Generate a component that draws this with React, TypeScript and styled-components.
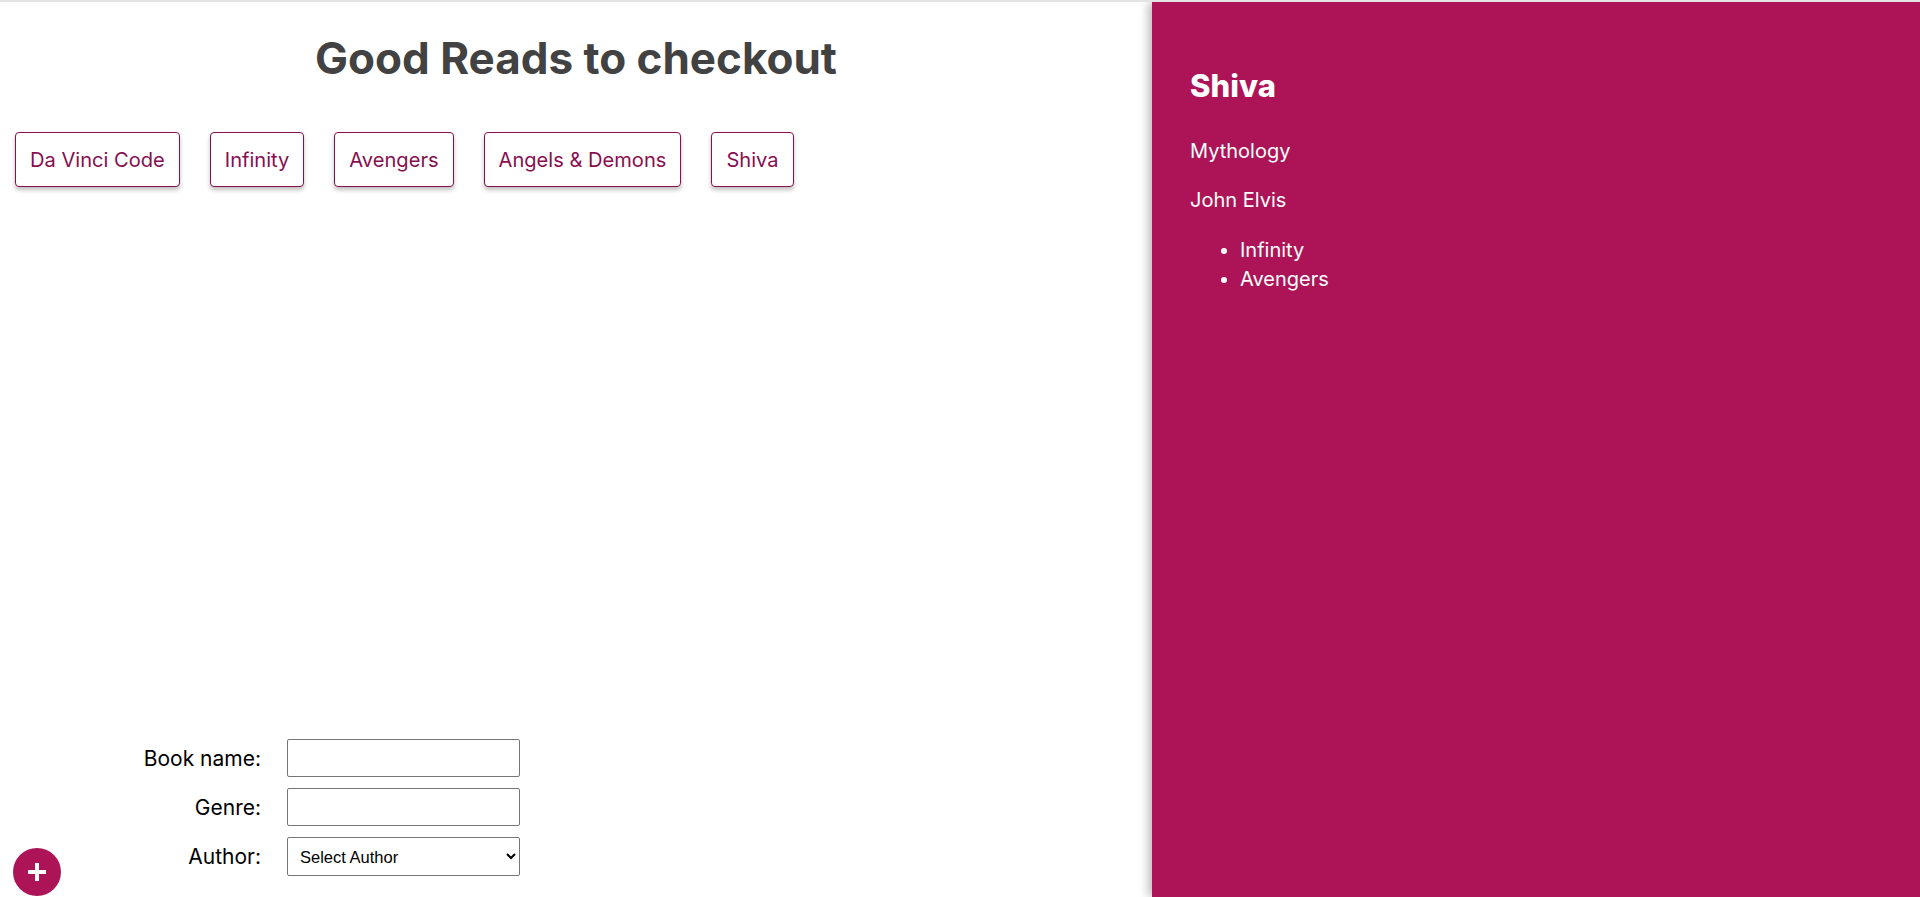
import React from "react";
import styled, { createGlobalStyle } from "styled-components";

const Global = createGlobalStyle`
  html, body { margin: 0; padding: 0; }
  body {
    font-family: Inter, "Noto Sans", sans-serif;
    background: #ffffff;
    border-top: 2px solid #e4e4e4;
  }
  * { box-sizing: border-box; }
`;

const Page = styled.div`
  display: flex;
  height: calc(100vh - 2px);
  overflow: hidden;
`;

const Main = styled.main`
  width: 60%;
  display: flex;
  flex-direction: column;
`;

const Title = styled.h1`
  margin: 30px 0 0;
  text-align: center;
  font-size: 44px;
  line-height: 52px;
  font-weight: 700;
  color: #424242;
`;

const BookList = styled.ul`
  list-style: none;
  display: flex;
  margin: 48px 0 0;
  padding: 0;
`;

const BookButton = styled.button`
  margin: 0 15px;
  height: 55px;
  padding: 0 14px;
  border: 1px solid #880e4f;
  border-radius: 4px;
  background: #ffffff;
  color: #880e4f;
  font-family: Inter, "Noto Sans", sans-serif;
  font-size: 20.1px;
  font-weight: 400;
  box-shadow: 0 3px 4px rgba(0, 0, 0, 0.25);
  cursor: pointer;
`;

const Form = styled.form`
  margin: auto 0 21px 15px;
  display: grid;
  grid-template-columns: 246px 233px;
  column-gap: 26px;
  row-gap: 11px;
  align-items: center;
`;

const Label = styled.label`
  text-align: right;
  font-size: 21px;
  color: #000000;
`;

const Input = styled.input`
  height: 38px;
  border: 1px solid #767676;
  border-radius: 2px;
  padding: 0 6px;
  font-size: 16px;
`;

const Select = styled.select`
  height: 39px;
  border: 1px solid #767676;
  border-radius: 2px;
  padding: 0 8px;
  font-family: "Liberation Sans", Arial, sans-serif;
  font-size: 16.5px;
  color: #000;
  background: #fff;
`;

const Fab = styled.button`
  position: fixed;
  left: 13px;
  bottom: 1px;
  width: 48px;
  height: 48px;
  border-radius: 50%;
  border: none;
  background: #ad1457;
  display: flex;
  align-items: center;
  justify-content: center;
  padding: 0;
  cursor: pointer;
`;

const Panel = styled.aside`
  width: 40%;
  background: #ad1457;
  color: #ffffff;
  padding: 64px 38px;
  box-shadow: -3px 0 10px rgba(0, 0, 0, 0.3);
  position: relative;
`;

const PanelTitle = styled.h2`
  margin: 0;
  font-size: 31px;
  line-height: 40px;
  font-weight: 800;
`;

const PanelText = styled.p<{ $top: number }>`
  margin: ${(p) => p.$top}px 0 0;
  font-size: 20px;
  line-height: 24px;
`;

const AuthorBooks = styled.ul`
  margin: 24px 0 0;
  padding-left: 50px;
  font-size: 20px;
  line-height: 29px;
`;

const books = ["Da Vinci Code", "Infinity", "Avengers", "Angels & Demons", "Shiva"];

export default function App() {
  return (
    <>
      <Global />
      <Page>
        <Main>
          <Title>Good Reads to checkout</Title>
          <BookList>
            {books.map((b) => (
              <li key={b}>
                <BookButton type="button">{b}</BookButton>
              </li>
            ))}
          </BookList>
          <Form onSubmit={(e) => e.preventDefault()}>
            <Label htmlFor="bookName">Book name:</Label>
            <Input id="bookName" type="text" />
            <Label htmlFor="genre">Genre:</Label>
            <Input id="genre" type="text" />
            <Label htmlFor="author">Author:</Label>
            <Select id="author" defaultValue="">
              <option value="">Select Author</option>
              <option value="john">John Elvis</option>
            </Select>
          </Form>
          <Fab type="button" aria-label="Add book">
            <svg width="20" height="20" viewBox="0 0 20 20">
              <path d="M10 1v18M1 10h18" stroke="#fff" strokeWidth="4" strokeLinecap="butt" />
            </svg>
          </Fab>
        </Main>
        <Panel>
          <PanelTitle>Shiva</PanelTitle>
          <PanelText $top={33}>Mythology</PanelText>
          <PanelText $top={25}>John Elvis</PanelText>
          <AuthorBooks>
            <li>Infinity</li>
            <li>Avengers</li>
          </AuthorBooks>
        </Panel>
      </Page>
    </>
  );
}
